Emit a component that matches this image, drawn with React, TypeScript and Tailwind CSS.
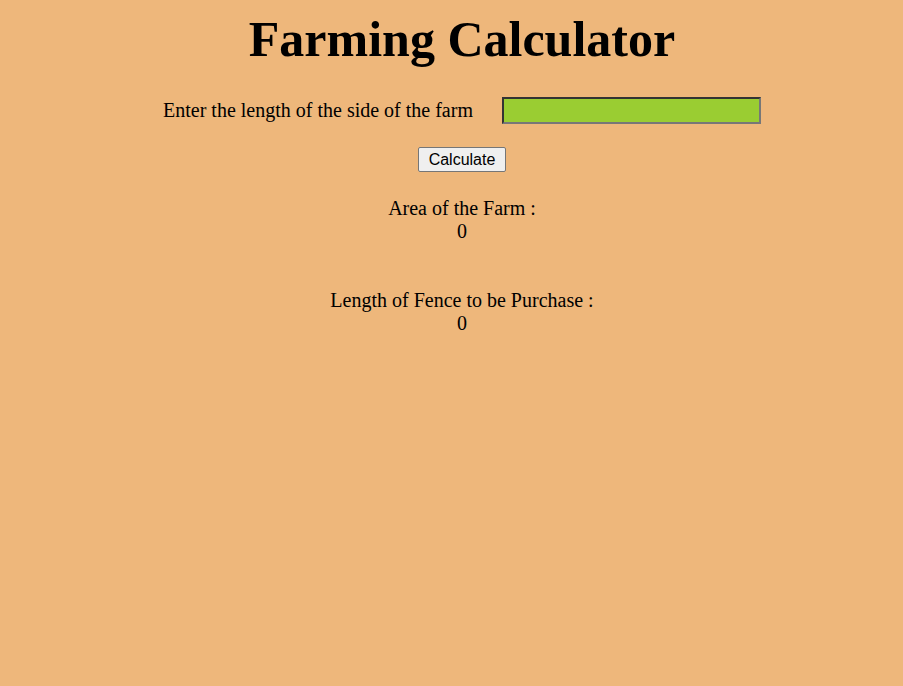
import { useState } from 'react'

export default function App() {
  const [side, setSide] = useState('')
  const [area, setArea] = useState(0)
  const [fence, setFence] = useState(0)

  const calculate = () => {
    const n = parseFloat(side) || 0
    setArea(n * n)
    setFence(n * 4)
  }

  return (
    <div className="min-h-[686px] bg-[#eeb77b] pl-[21px] text-black font-['Liberation_Serif',serif]">
      <h1 className="text-center text-[50px] font-bold leading-none pt-[14px]">Farming Calculator</h1>

      <div className="flex justify-center items-center mt-[33px]">
        <label className="text-[20px] leading-[23px]">Enter the length of the side of the farm</label>
        <input
          type="text"
          value={side}
          onChange={(e) => setSide(e.target.value)}
          className="ml-[29px] w-[259px] h-[27px] bg-[#9acd32] border-2 border-t-[#333] border-l-[#333] border-r-[#777] border-b-[#777] outline-none px-1"
        />
      </div>

      <div className="flex justify-center mt-[23px]">
        <button
          onClick={calculate}
          className="h-[25px] px-[10px] text-[16px] font-['Liberation_Sans',sans-serif] bg-[#efefef] border border-[#767676] rounded-[2px] hover:bg-[#e5e5e5]"
        >
          Calculate
        </button>
      </div>

      <div className="text-center text-[20px] leading-[23px] mt-[25px]">
        <p>Area of the Farm :</p>
        <p>{area}</p>
        <p className="mt-[46px]">Length of Fence to be Purchase :</p>
        <p>{fence}</p>
      </div>
    </div>
  )
}
